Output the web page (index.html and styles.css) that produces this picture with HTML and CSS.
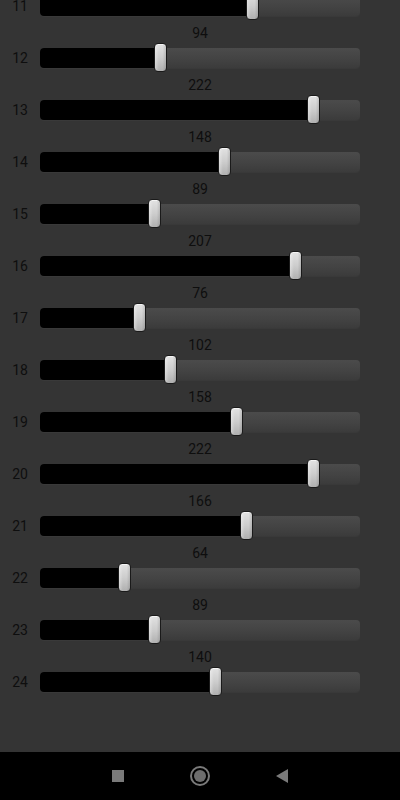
FILE: index.html
```html
<!DOCTYPE html>
<html lang="en">
<head>
  <meta charset="UTF-8" />
  <title>Channels</title>
  <link rel="stylesheet" href="styles.css">
</head>
<body>
  <div id="screen">
    <div id="channels"></div>
  </div>

  <div id="navbar">
    <span class="nav-square"></span>
    <span class="nav-home"><span class="nav-home-dot"></span></span>
    <svg class="nav-back" width="12" height="14" viewBox="0 0 12 14">
      <polygon points="12,0 12,14 0,7" fill="#7a7a7a" />
    </svg>
  </div>

  <script>
    const values = [171, 94, 222, 148, 89, 207, 76, 102, 158, 222, 166, 64, 89, 140];
    const channels = document.getElementById('channels');

    values.forEach((value, i) => {
      const offset = 8.5 + value / 255 * 304;
      const row = document.createElement('div');
      row.className = 'channel';
      row.innerHTML = `
        <div class="value">${value}</div>
        <div class="slider-row">
          <div class="label">${11 + i}</div>
          <div class="track">
            <div class="fill" style="width: ${offset}px"></div>
            <div class="thumb" style="left: ${offset - 6.5}px"></div>
          </div>
        </div>`;
      channels.appendChild(row);
    });
  </script>
</body>
</html>
```

FILE: styles.css
```css
body {
  margin: 0;
  width: 400px;
  height: 800px;
  display: flex;
  flex-direction: column;
  background-color: #343434;
  font-family: Roboto, "Liberation Sans", sans-serif;
  color: #0e0e0e;
  overflow: hidden;
}

#screen {
  height: 752px;
  overflow: hidden;
}

#channels {
  margin-top: -29px;
}

.channel {
  margin-bottom: 2px;
}

.value {
  height: 20px;
  line-height: 20px;
  text-align: center;
  font-size: 14px;
}

.slider-row {
  height: 30px;
  display: flex;
  align-items: center;
}

.label {
  width: 40px;
  text-align: center;
  font-size: 14px;
}

.track {
  position: relative;
  width: 320px;
  height: 20px;
  border-radius: 4px;
  background: linear-gradient(#4b4b4b, #434343 55%, #3b3b3b);
  box-shadow: 0 1px 0 #393939;
}

.fill {
  height: 100%;
  background-color: #000;
  border-radius: 4px 0 0 4px;
}

.thumb {
  position: absolute;
  top: -5px;
  width: 11px;
  height: 27px;
  border: 1px solid #1a1a1a;
  border-radius: 4px;
  background: linear-gradient(to right, rgba(255, 255, 255, 0.35), rgba(255, 255, 255, 0) 35%, rgba(0, 0, 0, 0) 70%, rgba(0, 0, 0, 0.12)),
              linear-gradient(#e2e2e2, #cdcdcd 50%, #b0b0b0);
  box-shadow: inset 0 1px 0 #f4f4f4;
}

#navbar {
  height: 48px;
  background-color: #000;
  display: flex;
  align-items: center;
  justify-content: center;
  gap: 66px;
}

.nav-square {
  width: 12px;
  height: 12px;
  background-color: #7a7a7a;
}

.nav-home {
  width: 16px;
  height: 16px;
  border: 2px solid #7a7a7a;
  border-radius: 50%;
  display: flex;
  align-items: center;
  justify-content: center;
}

.nav-home-dot {
  width: 12px;
  height: 12px;
  border-radius: 50%;
  background-color: #6e6e6e;
}
```
